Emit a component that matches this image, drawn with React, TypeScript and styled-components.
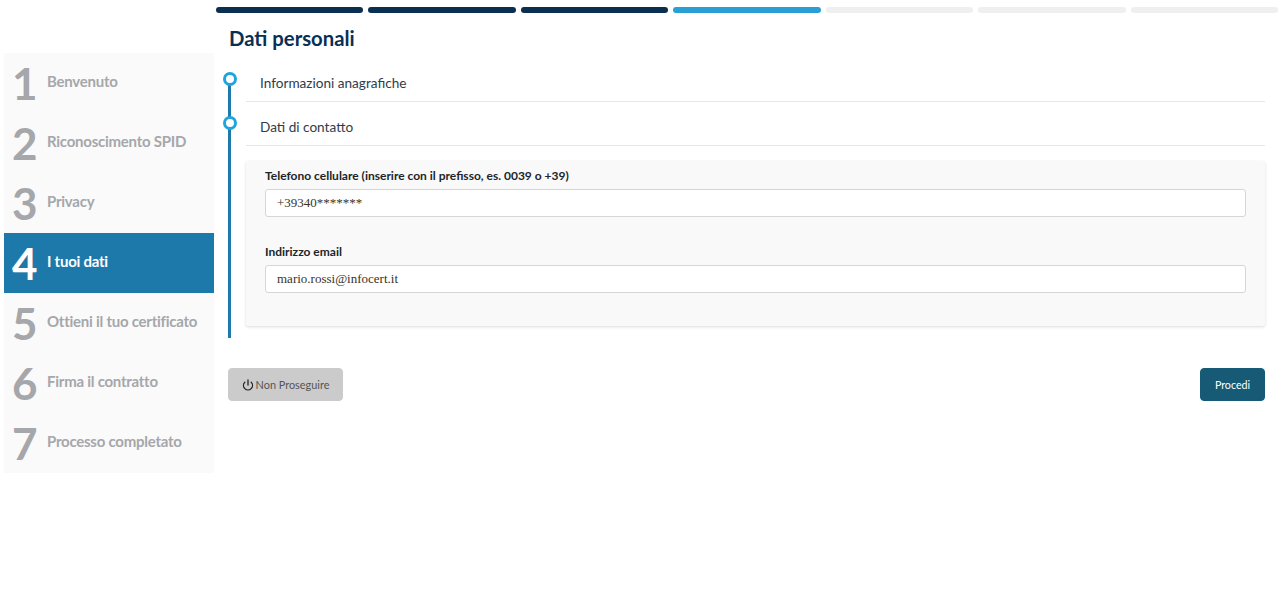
import React from "react";
import styled, { createGlobalStyle } from "styled-components";

const Global = createGlobalStyle`
  html, body { margin: 0; padding: 0; background: #fff; }
  body { font-family: Lato, "Liberation Sans", sans-serif; }
  * { box-sizing: border-box; }
`;

const Page = styled.div`
  display: flex;
  width: 1280px;
  height: 593px;
  overflow: hidden;
  padding-left: 4px;
`;

const Sidebar = styled.nav`
  flex: 0 0 210px;
  margin-top: 53px;
  height: 420px;
  background: #fafafa;
`;

const Step = styled.div<{ $active?: boolean }>`
  display: flex;
  align-items: center;
  height: 60px;
  padding-left: 8px;
  background: ${(p) => (p.$active ? "#1e79ab" : "transparent")};
  color: ${(p) => (p.$active ? "#fff" : "#a5a7aa")};
`;

const StepNumber = styled.span`
  flex: 0 0 35px;
  font-size: 44px;
  font-weight: 700;
  line-height: 60px;
`;

const StepLabel = styled.span`
  font-size: 15px;
  font-weight: 700;
  letter-spacing: -0.25px;
  margin-top: -4px;
`;

const Main = styled.main`
  flex: 0 0 1062px;
  margin-left: 2px;
  padding-top: 7px;
`;

const Progress = styled.div`
  display: grid;
  grid-template-columns: repeat(7, 1fr);
  column-gap: 5.3px;
`;

const Segment = styled.div<{ $color: string }>`
  height: 6px;
  border-radius: 3px;
  background: ${(p) => p.$color};
`;

const Content = styled.div`
  padding: 0 13px 0 12px;
`;

const Title = styled.h1`
  margin: 12px 0 0 1px;
  font-size: 20.3px;
  line-height: 26px;
  font-weight: 700;
  color: #0a2f55;
`;

const Timeline = styled.div`
  position: relative;
  margin-top: 7px;
  height: 280px;
  padding-left: 18px;

  &::before {
    content: "";
    position: absolute;
    left: 0;
    top: 20px;
    bottom: 0;
    width: 3px;
    background: #1e79ab;
  }
`;

const Section = styled.div`
  position: relative;
  height: 44px;
  padding: 6px 14px 0;
  display: flex;
  align-items: center;
  border-bottom: 1px solid #e7e7e7;
  font-size: 13.6px;
  color: #2f3c4b;
`;

const Dot = styled.span`
  position: absolute;
  left: -23px;
  top: 14px;
  width: 14px;
  height: 14px;
  border: 3px solid #1fa4dc;
  border-radius: 50%;
  background: #fff;
`;

const Panel = styled.div`
  margin-top: 15px;
  height: 165px;
  padding: 7px 19px 0;
  background: #f9f9f9;
  border-radius: 2px;
  box-shadow: 0 1px 3px rgba(0, 0, 0, 0.14);
`;

const Field = styled.div`
  height: 76px;
`;

const Label = styled.label`
  display: block;
  font-size: 12px;
  line-height: 16px;
  font-weight: 700;
  color: #212529;
  margin-bottom: 5px;
`;

const Input = styled.div`
  height: 28px;
  padding: 0 11px;
  display: flex;
  align-items: center;
  background: #fff;
  border: 1px solid #d6d6d6;
  border-radius: 3px;
  font-family: "Liberation Serif", serif;
  font-size: 13px;
  color: #3c3325;
`;

const Actions = styled.div`
  display: flex;
  justify-content: space-between;
  margin-top: 30px;
`;

const ActionButton = styled.button<{ $primary?: boolean }>`
  display: inline-flex;
  align-items: center;
  justify-content: center;
  gap: 2px;
  height: 33px;
  width: ${(p) => (p.$primary ? "65px" : "115px")};
  padding: 0;
  border: 1px solid ${(p) => (p.$primary ? "#175a75" : "#cbcbcb")};
  border-radius: 4px;
  background: ${(p) => (p.$primary ? "#175a75" : "#cbcbcb")};
  color: ${(p) => (p.$primary ? "#fff" : "#555")};
  font-family: Lato, sans-serif;
  font-size: ${(p) => (p.$primary ? "10.7px" : "10.9px")};
`;

const steps = [
  "Benvenuto",
  "Riconoscimento SPID",
  "Privacy",
  "I tuoi dati",
  "Ottieni il tuo certificato",
  "Firma il contratto",
  "Processo completato",
];

const segments = ["#0b2f51", "#0b2f51", "#0b2f51", "#2a9fd6", "#efefef", "#efefef", "#efefef"];

export default function App() {
  return (
    <Page>
      <Global />
      <Sidebar>
        {steps.map((s, i) => (
          <Step key={s} $active={i === 3}>
            <StepNumber>{i + 1}</StepNumber>
            <StepLabel>{s}</StepLabel>
          </Step>
        ))}
      </Sidebar>
      <Main>
        <Progress>
          {segments.map((c, i) => (
            <Segment key={i} $color={c} />
          ))}
        </Progress>
        <Content>
          <Title>Dati personali</Title>
          <Timeline>
            <Section>
              <Dot />
              Informazioni anagrafiche
            </Section>
            <Section>
              <Dot />
              Dati di contatto
            </Section>
            <Panel>
              <Field>
                <Label>Telefono cellulare (inserire con il prefisso, es. 0039 o +39)</Label>
                <Input>+39340*******</Input>
              </Field>
              <Field>
                <Label>Indirizzo email</Label>
                <Input>mario.rossi@infocert.it</Input>
              </Field>
            </Panel>
          </Timeline>
          <Actions>
            <ActionButton>
              <svg width="12" height="12" viewBox="0 0 24 24" fill="none" stroke="#222" strokeWidth="2.6" strokeLinecap="round">
                <path d="M12 2v10" />
                <path d="M18.4 6.6a9 9 0 1 1-12.8 0" />
              </svg>
              Non Proseguire
            </ActionButton>
            <ActionButton $primary>Procedi</ActionButton>
          </Actions>
        </Content>
      </Main>
    </Page>
  );
}
